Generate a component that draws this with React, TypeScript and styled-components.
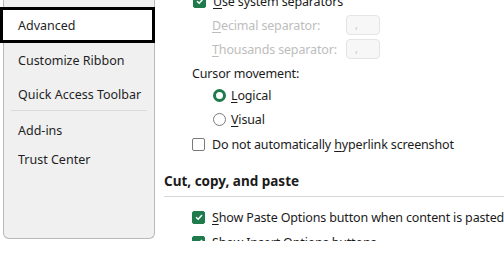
import React from "react";
import styled, { createGlobalStyle } from "styled-components";

const GREEN = "#1f7a4c";

const NAV = [
  { id: "advanced", label: "Advanced", h: 36, active: true },
  { id: "ribbon", label: "Customize Ribbon", h: 35 },
  { id: "qat", label: "Quick Access Toolbar", h: 32, divider: true },
  { id: "addins", label: "Add-ins", h: 38 },
  { id: "trust", label: "Trust Center", h: 20 },
];

const GlobalStyle = createGlobalStyle`
  html, body {
    margin: 0;
    padding: 0;
    background: #fff;
  }
  body {
    font-family: "Noto Sans", "Open Sans", sans-serif;
    font-size: 12.5px;
    color: #1b1b1b;
  }
`;

const Check = ({ on }: { on?: boolean }) => (
  <CheckBox $on={on}>
    {on && (
      <svg width="10" height="10" viewBox="0 0 10 10">
        <path d="M2 5.2 L4.2 7.2 L8 3" fill="none" stroke="#fff" strokeWidth="1.5" />
      </svg>
    )}
  </CheckBox>
);

// access key letter, underlined like in the Office dialogs
const U = ({ c, rest }: { c: string; rest: string }) => (
  <>
    <u>{c}</u>
    {rest}
  </>
);

const App: React.FC = () => {
  return (
    <>
      <GlobalStyle />
      <Frame>
        <Sidebar>
          {NAV.map((n) => (
            <React.Fragment key={n.id}>
              <NavItem $h={n.h} $active={n.active}>
                {n.label}
              </NavItem>
              {n.divider && <Divider />}
            </React.Fragment>
          ))}
        </Sidebar>
        <Content>
          <Row $h={24} $indent={38}>
            <Check on />
            <Label>
              <U c="U" rest="se system separators" />
            </Label>
          </Row>
          <Row $h={24} $indent={57}>
            <Muted>
              <U c="D" rest="ecimal separator:" />
            </Muted>
            <SepInput>,</SepInput>
          </Row>
          <Row $h={24} $indent={57}>
            <Muted>
              <U c="T" rest="housands separator:" />
            </Muted>
            <SepInput>,</SepInput>
          </Row>
          <Row $h={24} $indent={30}>
            <Label>Cursor movement:</Label>
          </Row>
          <Row $h={21} $indent={58}>
            <Radio $on />
            <Label $gap={5}>
              <U c="L" rest="ogical" />
            </Label>
          </Row>
          <Row $h={26} $indent={58}>
            <Radio />
            <Label $gap={5}>
              <U c="V" rest="isual" />
            </Label>
          </Row>
          <Row $h={24} $indent={37}>
            <Check />
            <Label>
              Do not automatically <U c="h" rest="yperlink screenshot" />
            </Label>
          </Row>
          <Section>
            <Heading>Cut, copy, and paste</Heading>
          </Section>
          <Row $h={24} $indent={37} $top={8}>
            <Check on />
            <Label>
              <U c="S" rest="how Paste Options button when content is pasted" />
            </Label>
          </Row>
          <Row $h={26} $indent={37}>
            <Check on />
            <Label>
              Show <U c="I" rest="nsert Options buttons" />
            </Label>
          </Row>
        </Content>
      </Frame>
    </>
  );
};

export default App;

const Frame = styled.div`
  display: flex;
  height: 241px;
  overflow: hidden;
`;

const Sidebar = styled.nav`
  flex: 0 0 152px;
  margin-left: 3px;
  height: 239px;
  box-sizing: border-box;
  padding-top: 7px;
  background: #f0f0f0;
  border: 1px solid #b9b9b9;
  border-top: none;
  border-radius: 0 0 6px 6px;
  display: flex;
  flex-direction: column;
`;

const NavItem = styled.div<{ $h: number; $active?: boolean }>`
  height: ${(p) => p.$h}px;
  box-sizing: border-box;
  display: flex;
  align-items: center;
  padding-left: 14px;
  white-space: nowrap;
  color: #1f1f1f;
  ${(p) =>
    p.$active &&
    `
    margin-left: -4px;
    margin-right: -1px;
    padding-left: 15px;
    border: 3px solid #000;
    background: #fff;
  `}
`;

const Divider = styled.div`
  height: 1px;
  margin: 0 7px;
  background: #dadada;
`;

const Content = styled.main`
  flex: 1;
  margin-top: -11px;
  display: flex;
  flex-direction: column;
  overflow: hidden;
  letter-spacing: -0.15px;
`;

const Row = styled.div<{ $h: number; $indent: number; $top?: number }>`
  height: ${(p) => p.$h}px;
  margin-top: ${(p) => p.$top ?? 0}px;
  flex-shrink: 0;
  display: flex;
  align-items: center;
  padding-left: ${(p) => p.$indent}px;
  white-space: nowrap;
`;

const Label = styled.span<{ $gap?: number }>`
  margin-left: ${(p) => p.$gap ?? 7}px;
  color: #1b1b1b;
  u {
    text-underline-offset: 2px;
  }
`;

const Muted = styled.span`
  width: 134px;
  color: #bdbdbd;
  u {
    text-underline-offset: 2px;
  }
`;

const SepInput = styled.div`
  width: 34px;
  height: 20px;
  box-sizing: border-box;
  border: 1px solid #e4e4e4;
  border-radius: 4px;
  background: #f7f7f7;
  color: #c8c8c8;
  font-size: 11px;
  line-height: 18px;
  padding-left: 8px;
`;

const CheckBox = styled.span<{ $on?: boolean }>`
  width: 13px;
  height: 13px;
  box-sizing: border-box;
  border-radius: 2px;
  display: inline-flex;
  align-items: center;
  justify-content: center;
  flex-shrink: 0;
  background: ${(p) => (p.$on ? GREEN : "#fff")};
  border: 1px solid ${(p) => (p.$on ? GREEN : "#7a7a7a")};
`;

const Radio = styled.span<{ $on?: boolean }>`
  width: 13px;
  height: 13px;
  box-sizing: border-box;
  border-radius: 50%;
  flex-shrink: 0;
  border: ${(p) => (p.$on ? `3.5px solid ${GREEN}` : "1px solid #7a7a7a")};
  background: #fff;
`;

const Section = styled.div`
  flex-shrink: 0;
  height: 41px;
  margin-left: 9px;
  padding-top: 16px;
  box-sizing: border-box;
  border-bottom: 1px solid #d6d6d6;
  letter-spacing: 0;
`;

const Heading = styled.div`
  font-weight: 700;
  font-size: 13.5px;
  line-height: 18px;
  color: #1b1b1b;
`;
